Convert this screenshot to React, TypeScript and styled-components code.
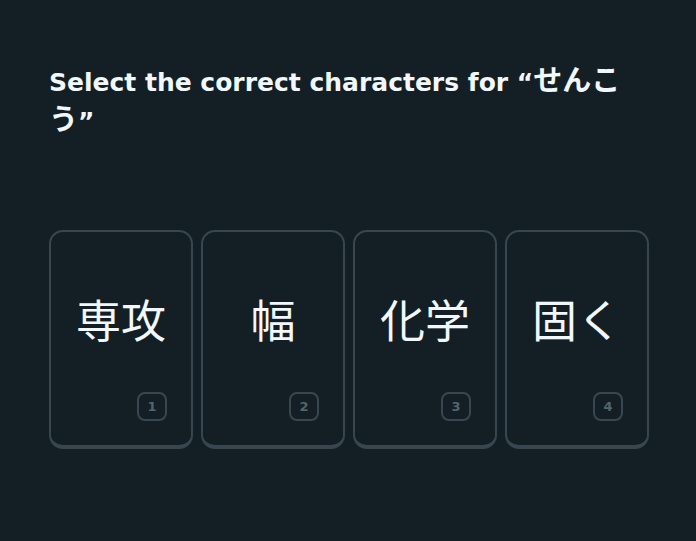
import styled, { createGlobalStyle } from 'styled-components';

const GlobalStyle = createGlobalStyle`
  html, body {
    margin: 0;
    padding: 0;
    background: #131f24;
  }
  body {
    font-family: 'DejaVu Sans', 'Noto Sans CJK JP', sans-serif;
  }
`;

const Page = styled.main`
  width: 600px;
  padding: 63px 48px 0 49px;
`;

const Title = styled.h1`
  margin: 0;
  font-size: 25px;
  line-height: 39px;
  font-weight: 700;
  color: #f1f7fb;
  font-family: 'DejaVu Sans', 'Noto Sans CJK JP', sans-serif;
`;

const Kana = styled.span`
  font-family: 'Noto Sans CJK JP', sans-serif;
  font-size: 29px;
  line-height: 20px;
  font-weight: 700;
`;

const Choices = styled.div`
  display: grid;
  grid-template-columns: repeat(4, 144px);
  column-gap: 8px;
  margin-top: 89px;
`;

const Card = styled.button`
  position: relative;
  height: 219px;
  box-sizing: border-box;
  background: transparent;
  border: 2px solid #37464f;
  border-bottom-width: 4px;
  border-radius: 14px;
  display: flex;
  align-items: center;
  justify-content: center;
  padding: 0 0 40px;
  cursor: pointer;
`;

const Word = styled.span`
  font-family: 'Noto Sans CJK JP', sans-serif;
  font-size: 45px;
  color: #f1f7fb;
`;

const Key = styled.span`
  position: absolute;
  right: 24px;
  bottom: 24px;
  width: 30px;
  height: 29px;
  box-sizing: border-box;
  border: 2px solid #37464f;
  border-radius: 8px;
  display: flex;
  align-items: center;
  justify-content: center;
  font-family: 'DejaVu Sans', sans-serif;
  font-weight: 700;
  font-size: 13px;
  color: #52656d;
`;

const options = ['専攻', '幅', '化学', '固く'];

export default function App() {
  return (
    <>
      <GlobalStyle />
      <Page>
        <Title>
          Select the correct characters for “<Kana>せんこう</Kana>”
        </Title>
        <Choices>
          {options.map((o, i) => (
            <Card key={o}>
              <Word>{o}</Word>
              <Key>{i + 1}</Key>
            </Card>
          ))}
        </Choices>
      </Page>
    </>
  );
}
